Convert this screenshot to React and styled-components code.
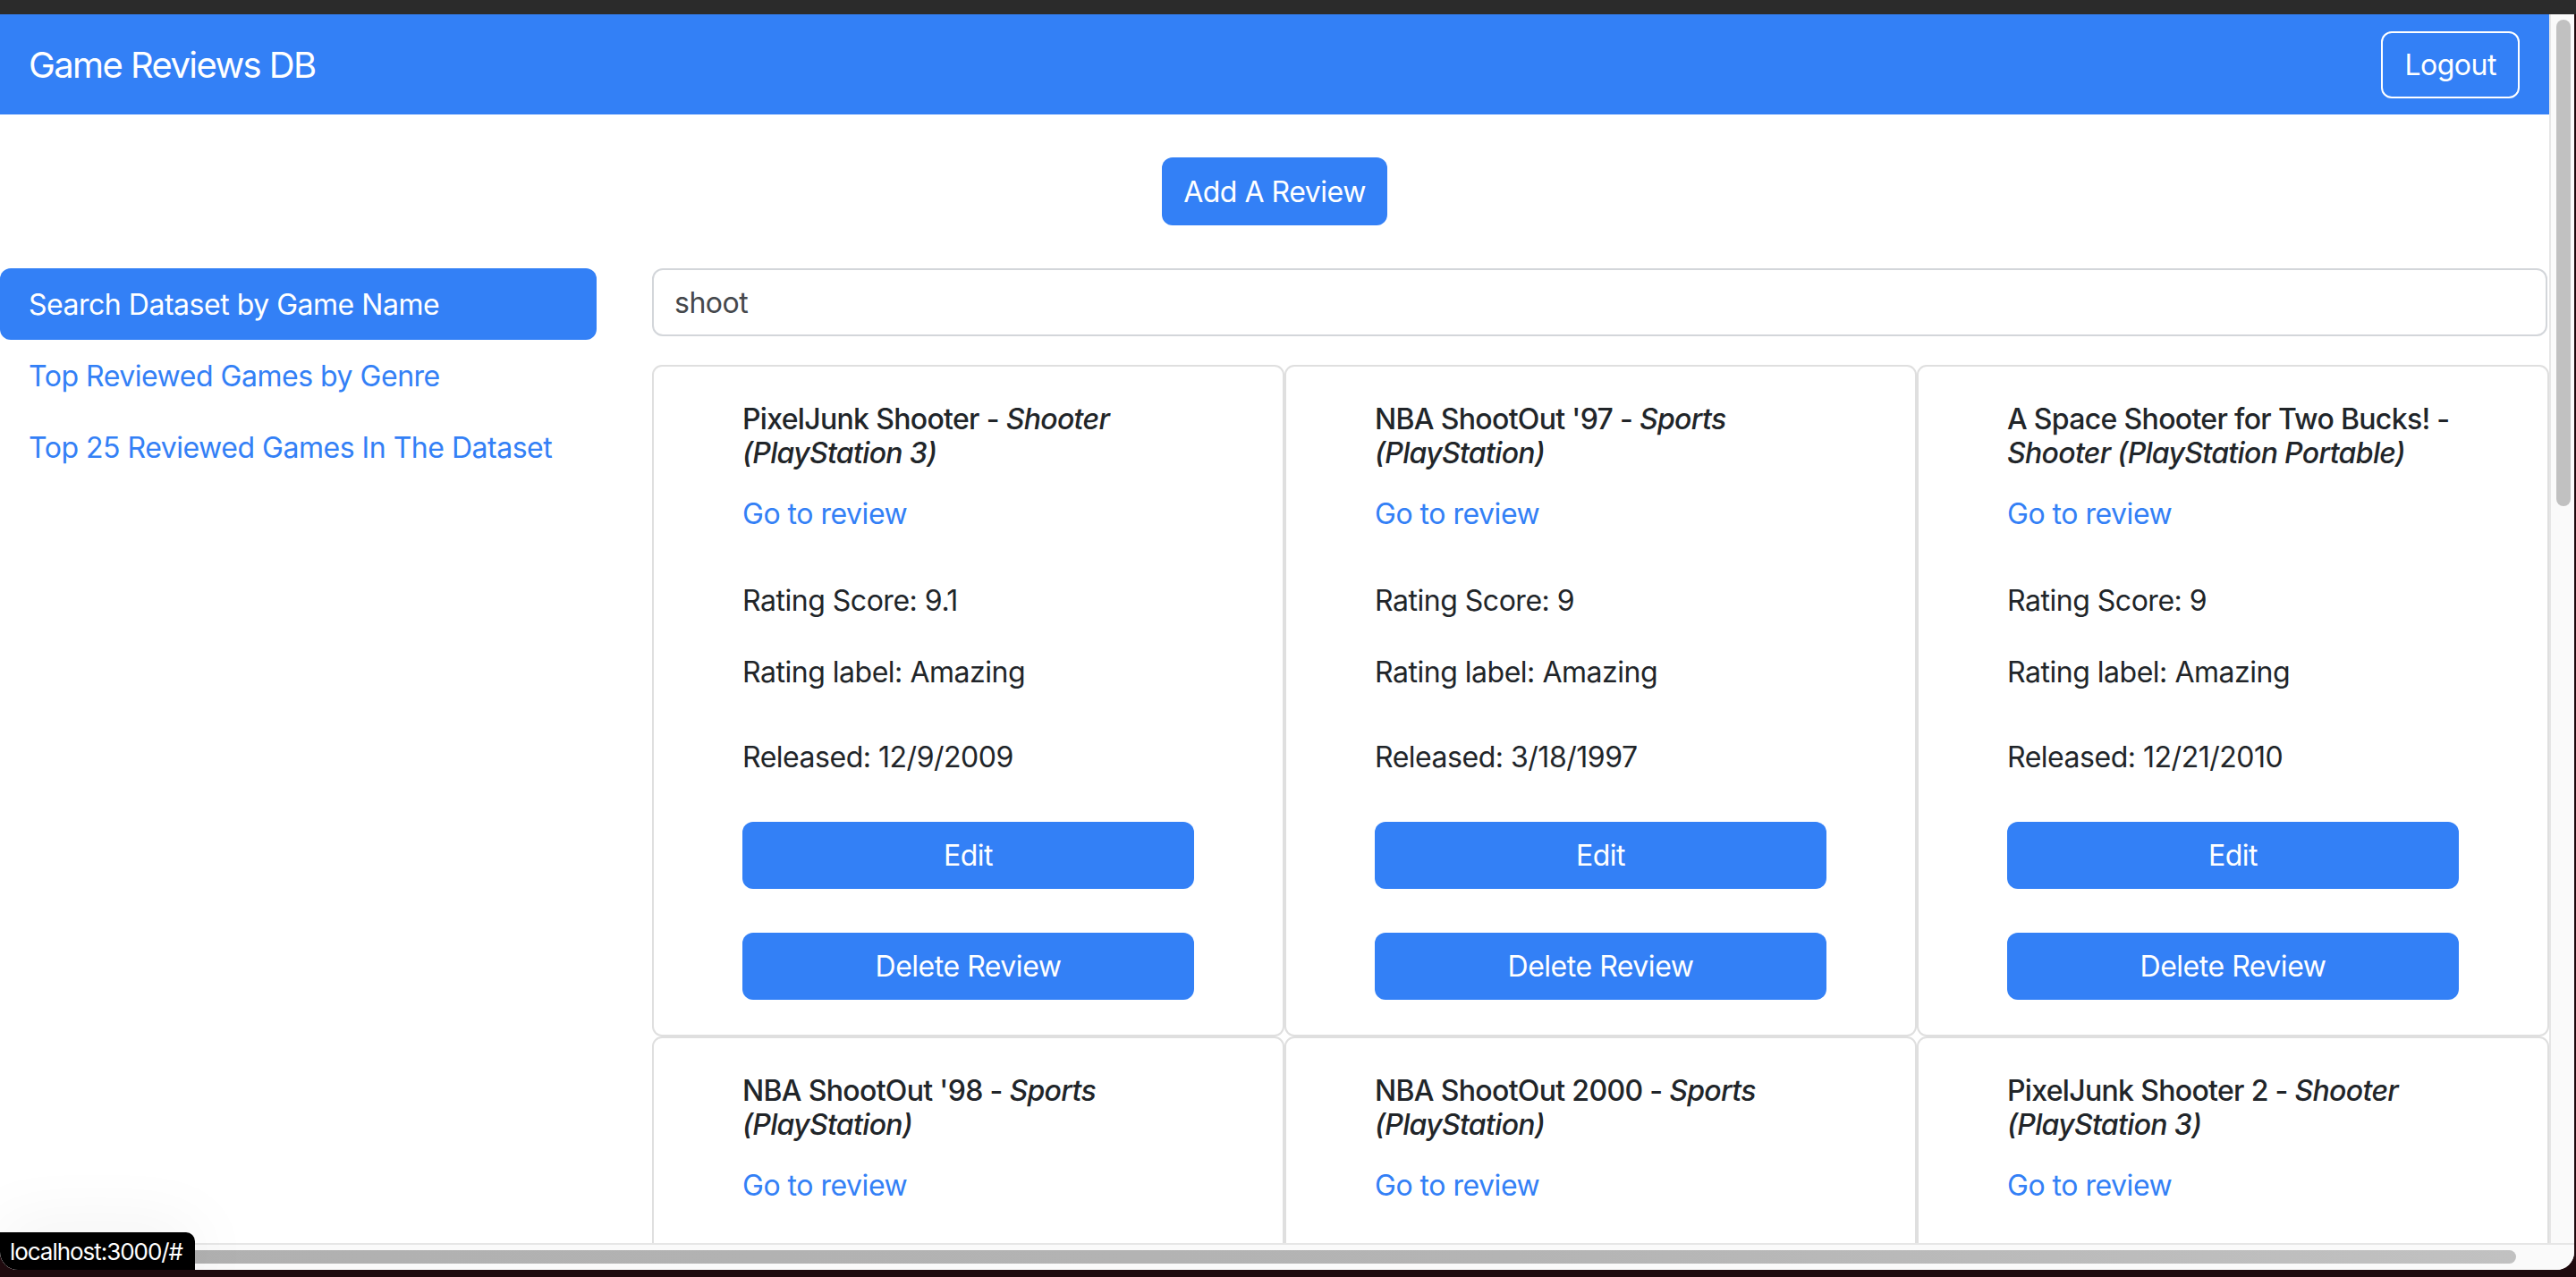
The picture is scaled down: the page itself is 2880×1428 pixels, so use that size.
import React from "react";
import styled, { createGlobalStyle } from "styled-components";

const BLUE = "#3380f6";

const GlobalStyle = createGlobalStyle`
  html, body {
    margin: 0;
    padding: 0;
    background: #1f0a0e;
  }
  body {
    font-family: Inter, "Liberation Sans", "Noto Sans", sans-serif;
    letter-spacing: -0.03em;
    color: #212529;
  }
  * {
    box-sizing: border-box;
  }
  button, input {
    font-family: inherit;
    letter-spacing: inherit;
  }
`;

const games = [
  { id: 1, name: "PixelJunk Shooter", genre: "Shooter", platform: "PlayStation 3", score: "9.1", label: "Amazing", released: "12/9/2009" },
  { id: 2, name: "NBA ShootOut '97", genre: "Sports", platform: "PlayStation", score: "9", label: "Amazing", released: "3/18/1997" },
  { id: 3, name: "A Space Shooter for Two Bucks!", genre: "Shooter", platform: "PlayStation Portable", score: "9", label: "Amazing", released: "12/21/2010" },
  { id: 4, name: "NBA ShootOut '98", genre: "Sports", platform: "PlayStation", score: "8.5", label: "Great", released: "3/31/1998" },
  { id: 5, name: "NBA ShootOut 2000", genre: "Sports", platform: "PlayStation", score: "8", label: "Great", released: "2/29/2000" },
  { id: 6, name: "PixelJunk Shooter 2", genre: "Shooter", platform: "PlayStation 3", score: "8.5", label: "Great", released: "3/15/2011" },
];

const sideLinks = [
  "Search Dataset by Game Name",
  "Top Reviewed Games by Genre",
  "Top 25 Reviewed Games In The Dataset",
];

function ReviewCard({ game }) {
  return (
    <Card>
      <CardTitle>
        {game.name} - <em>{game.genre} ({game.platform})</em>
      </CardTitle>
      <ReviewLink href="#">Go to review</ReviewLink>
      <CardText $gap={32}>Rating Score: {game.score}</CardText>
      <CardText $gap={47}>Rating label: {game.label}</CardText>
      <CardText $gap={49}>Released: {game.released}</CardText>
      <ActionButton>Edit</ActionButton>
      <ActionButton $top={49}>Delete Review</ActionButton>
    </Card>
  );
}

function App() {
  return (
    <Screen>
      <GlobalStyle />
      <TitleStrip />
      <Window>
        <WindowRow>
          <Viewport>
            <Navbar>
              <Brand>Game Reviews DB</Brand>
              <LogoutButton>Logout</LogoutButton>
            </Navbar>
            <AddWrap>
              <AddButton>Add A Review</AddButton>
            </AddWrap>
            <Body>
              <Sidebar>
                {sideLinks.map((label, i) => (
                  <NavPill key={label} href="#" $active={i === 0}>
                    {label}
                  </NavPill>
                ))}
              </Sidebar>
              <Main>
                <SearchInput defaultValue="shoot" />
                <CardGrid>
                  {games.map((g) => (
                    <ReviewCard key={g.id} game={g} />
                  ))}
                </CardGrid>
              </Main>
            </Body>
          </Viewport>
          <VScroll>
            <VThumb />
          </VScroll>
        </WindowRow>
        <HScroll>
          <HThumb />
        </HScroll>
        <StatusBubble>localhost:3000/#</StatusBubble>
      </Window>
    </Screen>
  );
}

export default App;

const Screen = styled.div`
  width: 2880px;
  height: 1428px;
  display: flex;
  flex-direction: column;
  overflow: hidden;
  background: #1f0a0e;
`;

const TitleStrip = styled.div`
  height: 16px;
  flex-shrink: 0;
  background: #2b2b2b;
`;

const Window = styled.div`
  position: relative;
  width: 2878px;
  height: 1404px;
  flex-shrink: 0;
  display: flex;
  flex-direction: column;
  background: #fafafa;
  border-bottom-left-radius: 20px;
  border-bottom-right-radius: 20px;
  overflow: hidden;
`;

const WindowRow = styled.div`
  display: flex;
  height: 1374px;
`;

const Viewport = styled.div`
  width: 2850px;
  overflow: hidden;
  background: #fff;
`;

const VScroll = styled.div`
  flex: 1;
  border-left: 2px solid #e6e6e6;
  background: #fafafa;
  padding: 6px 0 0 6px;
`;

const VThumb = styled.div`
  width: 16px;
  height: 544px;
  border-radius: 8px;
  background: #c1c1c1;
`;

const HScroll = styled.div`
  height: 30px;
  border-top: 2px solid #e6e6e6;
  background: #fafafa;
  padding: 6px 0 0 8px;
`;

const HThumb = styled.div`
  width: 2805px;
  height: 15px;
  border-radius: 8px;
  background: linear-gradient(90deg, #b0b0b0 0%, #b4b4b4 60%, #c1c1c1 100%);
`;

const StatusBubble = styled.div`
  position: absolute;
  left: 0;
  bottom: 0;
  height: 42px;
  padding: 0 14px 0 11px;
  display: flex;
  align-items: center;
  background: #000;
  color: #fff;
  font-size: 26px;
  letter-spacing: -0.04em;
  border-top-right-radius: 10px;
  box-shadow: 0 0 80px rgba(0, 0, 0, 0.08);
`;

const Navbar = styled.nav`
  height: 112px;
  padding: 0 33px 0 32px;
  display: flex;
  align-items: center;
  justify-content: space-between;
  background: ${BLUE};
`;

const Brand = styled.a`
  color: #fff;
  font-size: 40px;
  letter-spacing: -0.04em;
  text-decoration: none;
`;

const LogoutButton = styled.button`
  height: 75px;
  padding: 0 24px;
  border: 2px solid #fff;
  border-radius: 12px;
  background: transparent;
  color: #fff;
  font-size: 32px;
`;

const AddWrap = styled.div`
  display: flex;
  justify-content: center;
  padding-top: 48px;
  margin-bottom: 48px;
`;

const AddButton = styled.button`
  height: 76px;
  padding: 0 24px;
  border: none;
  border-radius: 12px;
  background: ${BLUE};
  color: #fff;
  font-size: 32px;
`;

const Body = styled.div`
  display: flex;
  align-items: flex-start;
`;

const Sidebar = styled.div`
  width: 667px;
  flex-shrink: 0;
  display: flex;
  flex-direction: column;
`;

const NavPill = styled.a`
  height: 80px;
  padding: 0 32px;
  display: flex;
  align-items: center;
  border-radius: 12px;
  font-size: 32px;
  text-decoration: none;
  color: ${(p) => (p.$active ? "#fff" : BLUE)};
  background: ${(p) => (p.$active ? BLUE : "transparent")};
`;

const Main = styled.div`
  flex: 1;
  margin-left: 62px;
`;

const SearchInput = styled.input`
  display: block;
  width: calc(100% - 2px);
  height: 76px;
  padding: 0 23px;
  border: 2px solid #d3d6da;
  border-radius: 12px;
  font-size: 32px;
  color: #45484c;
  outline: none;
`;

const CardGrid = styled.div`
  display: grid;
  grid-template-columns: repeat(3, 1fr);
  margin-top: 32px;
`;

const Card = styled.div`
  display: flex;
  flex-direction: column;
  padding: 40px 99px 39px;
  border: 2px solid #dfdfdf;
  border-radius: 11px;
  background: #fff;
`;

const CardTitle = styled.div`
  margin: 0 -16px 24px 0;
  font-size: 32px;
  font-weight: 500;
  line-height: 38px;
  letter-spacing: -0.021em;
  color: #212529;
`;

const ReviewLink = styled.a`
  align-self: flex-start;
  margin-bottom: 49px;
  padding-top: 1px;
  font-size: 32px;
  line-height: 47px;
  color: ${BLUE};
  text-decoration: none;
`;

const CardText = styled.p`
  margin: 0 0 ${(p) => p.$gap}px;
  padding-top: 1px;
  font-size: 32px;
  line-height: 47px;
`;

const ActionButton = styled.button`
  height: 75px;
  margin-top: ${(p) => p.$top || 0}px;
  border: none;
  border-radius: 12px;
  background: ${BLUE};
  color: #fff;
  font-size: 32px;
`;
